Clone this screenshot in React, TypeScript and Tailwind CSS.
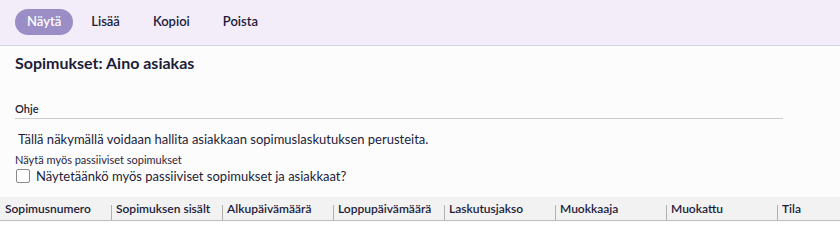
const columns = [
  "Sopimusnumero",
  "Sopimuksen sisält",
  "Alkupäivämäärä",
  "Loppupäivämäärä",
  "Laskutusjakso",
  "Muokkaaja",
  "Muokattu",
  "Tila",
];

const actions = ["Lisää", "Kopioi", "Poista"];

const App = () => {
  return (
    <div className="h-[223px] w-[840px] overflow-hidden bg-[#fcfcfc] font-['Lato','Noto_Sans',sans-serif] text-[#1c1c3a]">
      <div className="flex h-[46px] items-center gap-[3px] border-b border-[#d9d5dd] bg-[#f3ecf9] px-[15px] pb-[1px]">
        <button className="h-[26px] rounded-full bg-[#9b8dc5] px-[12px] text-[13px] font-semibold text-white">
          Näytä
        </button>
        {actions.map((a) => (
          <button key={a} className="px-[15px] text-[13px] font-semibold">
            {a}
          </button>
        ))}
      </div>
      <div className="px-[15px]">
        <h1 className="pt-[5px] text-[16px] font-bold leading-[24px]">Sopimukset: Aino asiakas</h1>
        <div className="mt-[27px] w-[768px] border-b border-[#cccccc] pb-[2px] text-[11px] font-semibold leading-[14px]">
          Ohje
        </div>
        <p className="mt-[11px] pl-[3px] text-[13px] leading-[18px]">
          Tällä näkymällä voidaan hallita asiakkaan sopimuslaskutuksen perusteita.
        </p>
        <div className="mt-[5px] text-[11px] leading-[14px] text-[#2a2440]">
          Näytä myös passiiviset sopimukset
        </div>
        <label className="flex items-center gap-[6px] pl-[1px] text-[13px] leading-[18px]">
          <span className="h-[14px] w-[14px] rounded-[2px] border border-[#8a8a8a] bg-white" />
          Näytetäänkö myös passiiviset sopimukset ja asiakkaat?
        </label>
      </div>
      <div className="mt-[12px] flex h-[24px] border-b border-[#bdbdbd] bg-[#f2f2f2]">
        {columns.map((c, i) => (
          <div
            key={c}
            className="relative flex w-[111px] shrink-0 items-center overflow-hidden whitespace-nowrap pl-[5px] text-[12px] font-semibold"
          >
            {i > 0 && <span className="absolute bottom-0 left-0 h-[15px] w-px bg-[#b0b0b0]" />}
            {c}
          </div>
        ))}
      </div>
    </div>
  );
};

export default App;
